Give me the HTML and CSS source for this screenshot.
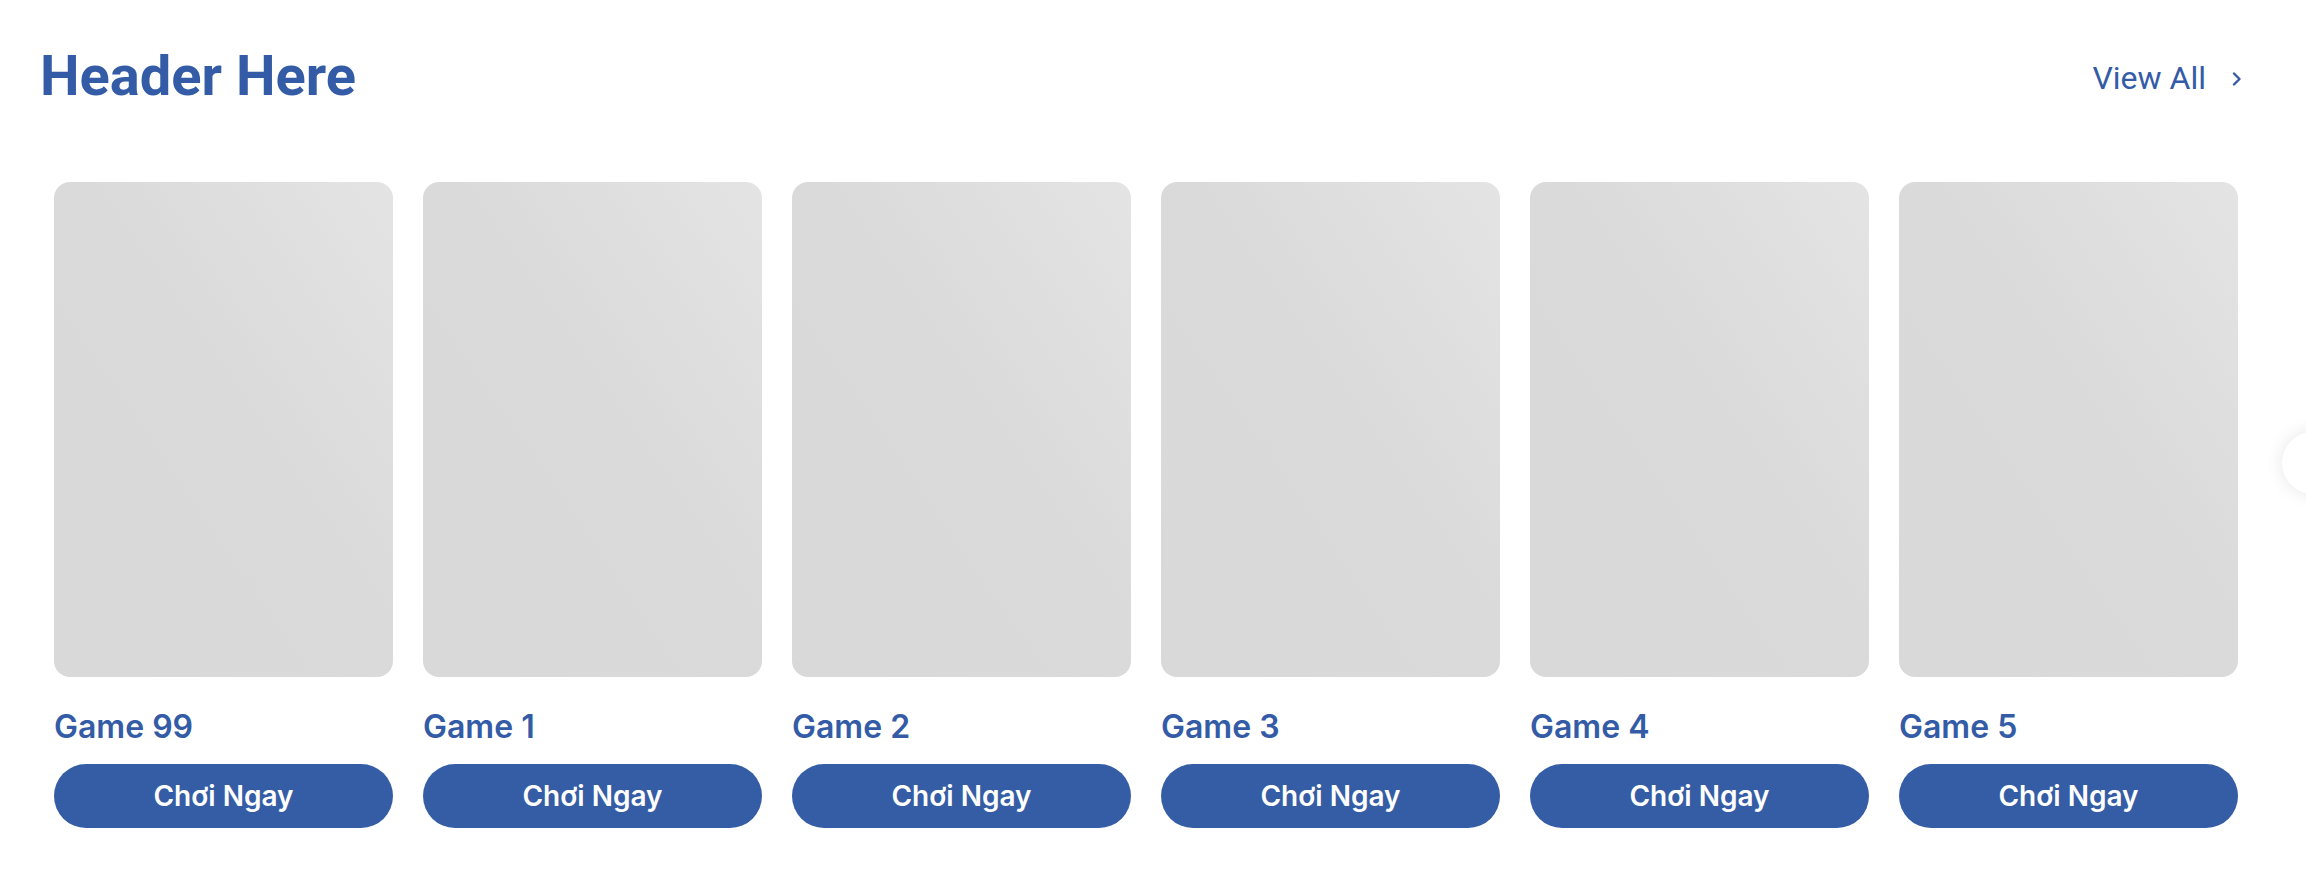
FILE: index.html
```html
<!DOCTYPE html>
<html lang="vi">
<head>
<meta charset="utf-8">
<title>Header Here</title>
<link rel="stylesheet" href="styles.css">
</head>
<body>
<section class="section">
  <div class="section-head">
    <h2 class="title">Header Here</h2>
    <a class="view-all" href="#">View All
      <svg class="chev" width="10" height="14" viewBox="0 0 10 14"><path d="M2 1.5 L7.5 7 L2 12.5" fill="none" stroke="currentColor" stroke-width="2.4" stroke-linecap="round" stroke-linejoin="round"/></svg>
    </a>
  </div>
  <div class="slider">
    <div class="cards">
      <div class="card"><div class="thumb"></div><div class="name">Game 99</div><button class="play">Chơi Ngay</button></div>
      <div class="card"><div class="thumb"></div><div class="name">Game 1</div><button class="play">Chơi Ngay</button></div>
      <div class="card"><div class="thumb"></div><div class="name">Game 2</div><button class="play">Chơi Ngay</button></div>
      <div class="card"><div class="thumb"></div><div class="name">Game 3</div><button class="play">Chơi Ngay</button></div>
      <div class="card"><div class="thumb"></div><div class="name">Game 4</div><button class="play">Chơi Ngay</button></div>
      <div class="card"><div class="thumb"></div><div class="name">Game 5</div><button class="play">Chơi Ngay</button></div>
    </div>
    <button class="next" aria-label="Next">
      <svg width="14" height="20" viewBox="0 0 14 20"><path d="M3 3 L10 10 L3 17" fill="none" stroke="#345ca6" stroke-width="2.4" stroke-linecap="round" stroke-linejoin="round"/></svg>
    </button>
  </div>
</section>
</body>
</html>
```

FILE: styles.css
```css
html, body {
  margin: 0;
  padding: 0;
  background: #ffffff;
  overflow: hidden;
}

.section {
  padding: 43px 64px 0 40px;
}

.section-head {
  display: flex;
  justify-content: space-between;
  align-items: center;
}

.title {
  margin: 0;
  font-family: Roboto, "Liberation Sans", sans-serif;
  font-weight: 700;
  font-size: 56px;
  line-height: 66px;
  color: #345ca6;
}

.view-all {
  display: flex;
  align-items: center;
  gap: 26px;
  padding-top: 5px;
  font-family: Roboto, "Liberation Sans", sans-serif;
  font-weight: 400;
  font-size: 32px;
  line-height: 37px;
  color: #345ca6;
  text-decoration: none;
}

.chev {
  display: block;
  margin-top: 1px;
}

.slider {
  position: relative;
  margin-top: 73px;
  padding-left: 14px;
}

.cards {
  display: flex;
  gap: 30px;
}

.card {
  width: 339px;
  flex: 0 0 339px;
  display: flex;
  flex-direction: column;
}

.thumb {
  height: 495px;
  border-radius: 16px;
  background: linear-gradient(to bottom left, #e4e4e4 0%, #dadada 45%, #d9d9d9 100%);
}

.name {
  margin-top: 30px;
  font-family: Inter, "Liberation Sans", sans-serif;
  font-weight: 600;
  font-size: 32px;
  line-height: 39px;
  color: #345ca6;
}

.play {
  margin-top: 18px;
  height: 64px;
  border: 0;
  border-radius: 32px;
  background: #355da5;
  color: #ffffff;
  font-family: Inter, "Liberation Sans", sans-serif;
  font-weight: 600;
  font-size: 28px;
  cursor: pointer;
  padding: 0;
}

.next {
  position: absolute;
  left: 2242px;
  top: 250px;
  width: 62px;
  height: 62px;
  border: 0;
  border-radius: 50%;
  background: #ffffff;
  box-shadow: 0 0 18px rgba(0, 0, 0, 0.10);
  display: flex;
  align-items: center;
  justify-content: center;
  padding: 0;
}
```
